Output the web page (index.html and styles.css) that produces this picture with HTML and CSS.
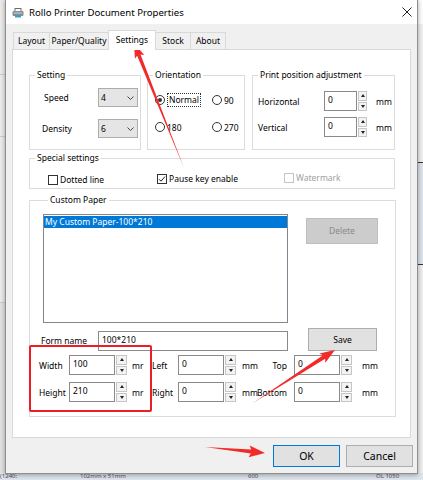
FILE: index.html
```html
<!DOCTYPE html>
<html>
<head>
<meta charset="utf-8">
<link rel="stylesheet" href="styles.css">
</head>
<body>
<div class="desktop">
  <div class="bg-table">
    <span class="c1">(1240:</span><span class="c2">102mm x 51mm</span><span class="c3">600</span><span class="c4">OL 1050</span>
  </div>

  <div class="window">
    <div class="titlebar">
      <svg class="app-icon" width="12" height="10" viewBox="0 0 12 10">
        <rect x="3" y="0.5" width="6" height="3" fill="#fff" stroke="#6d6d6d" stroke-width="1"/>
        <rect x="0.5" y="3" width="11" height="5" rx="1" fill="#8a8f96"/>
        <rect x="2" y="4.5" width="8" height="1" fill="#c9ced4"/>
        <rect x="3" y="7" width="6" height="2.5" fill="#3aa0c8"/>
      </svg>
      <span class="title">Rollo Printer Document Properties</span>
      <svg class="close" width="10" height="10" viewBox="0 0 10 10">
        <path d="M0.5 0.5L9.5 9.5M9.5 0.5L0.5 9.5" stroke="#222" stroke-width="1"/>
      </svg>
    </div>

    <div class="client">
      <div class="tabs">
        <div class="tab t-layout">Layout</div>
        <div class="tab t-paper">Paper/Quality</div>
        <div class="tab t-settings active">Settings</div>
        <div class="tab t-stock">Stock</div>
        <div class="tab t-about">About</div>
      </div>

      <div class="panel">
        <div class="row1">
          <fieldset class="grp g-setting">
            <legend>Setting</legend>
            <div class="setting-grid">
              <span class="lbl speed">Speed</span>
              <div class="combo"><span>4</span><svg class="chev" width="7" height="4" viewBox="0 0 7 4"><path d="M0.5 0.5L3.5 3.5L6.5 0.5" fill="none" stroke="#333" stroke-width="0.9"/></svg></div>
              <span class="lbl">Density</span>
              <div class="combo"><span>6</span><svg class="chev" width="7" height="4" viewBox="0 0 7 4"><path d="M0.5 0.5L3.5 3.5L6.5 0.5" fill="none" stroke="#333" stroke-width="0.9"/></svg></div>
            </div>
          </fieldset>

          <fieldset class="grp g-orient">
            <legend>Orientation</legend>
            <div class="orient-grid">
              <label class="radio"><span class="rdot checked"></span><span class="focus">Normal</span></label>
              <label class="radio"><span class="rdot"></span><span>90</span></label>
              <label class="radio"><span class="rdot"></span><span>180</span></label>
              <label class="radio"><span class="rdot"></span><span>270</span></label>
            </div>
          </fieldset>

          <fieldset class="grp g-print">
            <legend>Print position adjustment</legend>
            <div class="print-grid">
              <span class="lbl">Horizontal</span>
              <div class="spin small"><div class="spin-in">0</div><div class="spin-btns"><span class="up"></span><span class="down"></span></div></div>
              <span class="unit">mm</span>
              <span class="lbl">Vertical</span>
              <div class="spin small"><div class="spin-in">0</div><div class="spin-btns"><span class="up"></span><span class="down"></span></div></div>
              <span class="unit">mm</span>
            </div>
          </fieldset>
        </div>

        <fieldset class="grp g-special">
          <legend>Special settings</legend>
          <div class="special-row">
            <label class="check c-dotted"><span class="cbox"></span><span>Dotted line</span></label>
            <label class="check c-pause"><span class="cbox"><svg width="8" height="8" viewBox="0 0 8 8"><path d="M1 4.2L3 6.2L7 1.5" fill="none" stroke="#222" stroke-width="1"/></svg></span><span>Pause key enable</span></label>
            <label class="check c-water disabled"><span class="cbox"></span><span>Watermark</span></label>
          </div>
        </fieldset>

        <fieldset class="grp g-custom">
          <legend>Custom Paper</legend>
          <div class="list-row">
            <div class="listbox"><div class="item sel">My Custom Paper-100*210</div></div>
            <div class="btn btn-delete">Delete</div>
          </div>
          <div class="form-row">
            <span class="lbl form-lbl">Form name</span>
            <div class="textbox">100*210</div>
            <div class="btn btn-save">Save</div>
          </div>
          <div class="size-grid">
            <span class="lbl">Width</span>
            <div class="spin"><div class="spin-in">100</div><div class="spin-btns"><span class="up"></span><span class="down"></span></div></div>
            <span class="unit u1">mr</span>
            <span class="lbl">Left</span>
            <div class="spin"><div class="spin-in">0</div><div class="spin-btns"><span class="up"></span><span class="down"></span></div></div>
            <span class="unit u2">mm</span>
            <span class="lbl r">Top</span>
            <div class="spin"><div class="spin-in">0</div><div class="spin-btns"><span class="up"></span><span class="down"></span></div></div>
            <span class="unit u3">mm</span>

            <span class="lbl">Height</span>
            <div class="spin"><div class="spin-in">210</div><div class="spin-btns"><span class="up"></span><span class="down"></span></div></div>
            <span class="unit u1">mr</span>
            <span class="lbl">Right</span>
            <div class="spin"><div class="spin-in">0</div><div class="spin-btns"><span class="up"></span><span class="down"></span></div></div>
            <span class="unit u2">mm</span>
            <span class="lbl r">Bottom</span>
            <div class="spin"><div class="spin-in">0</div><div class="spin-btns"><span class="up"></span><span class="down"></span></div></div>
            <span class="unit u3">mm</span>
          </div>
        </fieldset>
      </div>

      <div class="buttons">
        <div class="btn btn-ok">OK</div>
        <div class="btn btn-cancel">Cancel</div>
      </div>
    </div>
  </div>

  <div class="redbox"></div>
  <svg class="arrows" width="423" height="480" viewBox="0 0 423 480">
    <g fill="#f22a2a">
      <g transform="translate(184 168) rotate(-111.8)"><polygon points="0,0 121.6,-1.8 119.6,-5 134.6,0 119.6,5 121.6,1.8"/></g>
      <g transform="translate(253 403) rotate(-32.9)"><polygon points="0,0 84.6,-2 82.6,-5.5 97.6,0 82.6,5.5 84.6,2"/></g>
      <g transform="translate(205 447) rotate(5.7)"><polygon points="0,0 46.3,-2 44.3,-6 60.3,0 44.3,6 46.3,2"/></g>
    </g>
  </svg>
</div>
</body>
</html>
```

FILE: styles.css
```css
* { box-sizing: border-box; }
html, body { margin: 0; padding: 0; }
body {
  font-family: "Noto Sans", "Open Sans", sans-serif;
  font-size: 8.5px;
  color: #000;
}

.desktop {
  position: relative;
  width: 423px;
  height: 480px;
  overflow: hidden;
  display: flex;
  flex-direction: column;
  justify-content: flex-end;
  background:
    linear-gradient(to bottom, #fff 0, #fff 24px, #f0f0f0 24px, #f0f0f0 162px, #333 162px, #333 163px, #dde4ec 163px, #dde4ec 264px, #333 264px, #333 265px, #efefef 265px) right top / 6px 100% no-repeat,
    linear-gradient(to bottom, #ececec 0, #ececec 74px, #cfcfcf 74px, #cfcfcf 75px, #ececec 75px, #ececec 136px, #cfcfcf 136px, #cfcfcf 137px, #ececec 137px, #ececec 302px, #cfcfcf 302px, #cfcfcf 303px, #e2e2e2 303px) left top / 6px 100% no-repeat,
    #e9e9e9;
}

.bg-table {
  height: 7px;
  background: #dfe5ec;
  color: #555;
  font-size: 6px;
  line-height: 7px;
  overflow: hidden;
  display: flex;
}
.bg-table .c1 { width: 80px; }
.bg-table .c2 { width: 168px; }
.bg-table .c3 { width: 128px; }

/* window */
.window {
  position: absolute;
  left: 5px;
  top: -1px;
  width: 413px;
  height: 475px;
  background: #f0f0f0;
  border: 1px solid #8f8f8f;
  box-shadow: 0 1px 5px rgba(0,0,0,0.35);
  display: flex;
  flex-direction: column;
}
.titlebar {
  height: 24px;
  background: #fff;
  display: flex;
  align-items: center;
  padding: 0 5px 0 6px;
}
.app-icon { margin-top: 1px; }
.title {
  margin-left: 5px;
  font-size: 9.6px;
  color: #000;
}
.close { margin-left: auto; }

.client {
  flex: 1;
  padding: 6px 4px 0 6px;
  display: flex;
  flex-direction: column;
}

/* tabs */
.tabs {
  height: 19px;
  display: flex;
  align-items: flex-end;
  padding-left: 1px;
  position: relative;
  z-index: 2;
}
.tab {
  height: 17px;
  margin-right: -1px;
  border: 1px solid #d9d9d9;
  border-bottom: none;
  background: #f0f0f0;
  display: flex;
  align-items: center;
  justify-content: center;
  line-height: 12px;
}
.tab.active {
  height: 20px;
  margin-bottom: -1px;
  background: #fff;
  position: relative;
  z-index: 3;
  padding-bottom: 2px;
}
.t-layout { width: 37px; }
.t-paper { width: 60px; }
.t-settings { width: 48px; }
.t-stock { width: 36px; }
.t-about { width: 36px; }

.panel {
  width: 399px;
  height: 389px;
  border: 1px solid #d9d9d9;
  background: #fff;
  padding: 19px 0 0 16px;
}

/* group boxes */
fieldset.grp {
  margin: 0;
  padding: 0;
  min-width: 0;
  border: 1px solid #dcdcdc;
}
fieldset.grp legend {
  margin-left: 5px;
  padding: 0 2px;
  line-height: 12px;
  font-size: 8.5px;
}

.row1 { display: flex; }
.g-setting { width: 112px; height: 81px; }
.g-orient { width: 98px; height: 81px; margin-left: 6px !important; }
.g-print { width: 143px; height: 81px; margin-left: 7px !important; }

.setting-grid {
  display: grid;
  grid-template-columns: 56px 40px;
  grid-auto-rows: 19px;
  row-gap: 12px;
  align-items: center;
  padding: 7px 0 0 12px;
}
.lbl { white-space: nowrap; }
.speed { margin-left: 2px; }
.combo {
  height: 19px;
  background: #e5e5e5;
  border: 1px solid #adadad;
  display: flex;
  align-items: center;
  padding-left: 2px;
  line-height: 12px;
}
.chev { margin-left: auto; margin-right: 3px; }

.orient-grid {
  display: grid;
  grid-template-columns: 57px auto;
  grid-auto-rows: 14px;
  row-gap: 13px;
  align-items: center;
  padding: 12px 0 0 7px;
}
.radio { display: flex; align-items: center; gap: 2px; white-space: nowrap; }
.rdot {
  width: 10px;
  height: 10px;
  border: 1px solid #333;
  border-radius: 50%;
  background: #fff;
  display: flex;
  align-items: center;
  justify-content: center;
}
.rdot.checked::after {
  content: "";
  width: 4px;
  height: 4px;
  border-radius: 50%;
  background: #333;
}
.focus { border: 1px dotted #333; padding: 0 1px; line-height: 12px; }

.print-grid {
  display: grid;
  grid-template-columns: 66px 52px auto;
  grid-auto-rows: 20px;
  row-gap: 6px;
  align-items: center;
  padding: 10px 0 0 5px;
}

/* spinner */
.spin { display: flex; gap: 1px; height: 20px; width: 58px; }
.spin-in {
  flex: 1;
  background: #fff;
  border: 1px solid #8a8a8a;
  padding: 1px 0 0 3px;
  line-height: 13px;
}
.spin-btns { width: 11px; display: flex; flex-direction: column; gap: 1px; }
.spin.small { width: 43px; }
.spin.small .spin-btns { width: 9px; }
.spin-btns span {
  flex: 1;
  border: 1px solid #c6c6c6;
  background: #f3f3f3;
  display: flex;
  align-items: center;
  justify-content: center;
}
.spin-btns .up::after {
  content: "";
  border-left: 2.5px solid transparent;
  border-right: 2.5px solid transparent;
  border-bottom: 3px solid #222;
}
.spin-btns .down::after {
  content: "";
  border-left: 2.5px solid transparent;
  border-right: 2.5px solid transparent;
  border-top: 3px solid #222;
}

/* special */
.g-special { height: 37px; margin-top: 2px !important; width: 366px; }
.special-row {
  display: flex;
  align-items: center;
  padding: 6px 0 0 18px;
  height: 24px;
}
.check { display: flex; align-items: center; gap: 2px; white-space: nowrap; line-height: 12px; }
.c-dotted { width: 109px; margin-top: 2px; }
.c-pause { width: 127px; }
.c-water { margin-top: -2px; }
.cbox {
  width: 10px;
  height: 10px;
  border: 1px solid #333;
  background: #fff;
  display: flex;
  align-items: center;
  justify-content: center;
}
.check.disabled { color: #a0a0a0; }
.check.disabled .cbox { border-color: #c4c4c4; }

/* custom paper */
.g-custom { height: 223px; margin-top: 5px !important; width: 367px; padding: 8px 0 0 13px !important; }
.list-row { display: flex; align-items: flex-start; }
.listbox {
  width: 245px;
  height: 109px;
  border: 1px solid #82878f;
  padding: 1px 0 0 0;
}
.item { height: 12px; line-height: 12px; padding-left: 1px; }
.item.sel { background: #0078d7; color: #fff; }

.btn {
  display: flex;
  align-items: center;
  justify-content: center;
  border: 1px solid #adadad;
  background: #e1e1e1;
  line-height: 12px;
}
.btn-delete {
  width: 72px;
  height: 26px;
  margin: 4px 0 0 18px;
  background: #cccccc;
  border-color: #bfbfbf;
  color: #8a8a8a;
}

.form-row {
  display: flex;
  align-items: flex-end;
  margin-top: 5px;
  height: 23px;
}
.form-lbl { width: 57px; margin-left: -2px; align-self: center; padding-top: 2px; }
.textbox {
  width: 190px;
  height: 20px;
  border: 1px solid #8a8a8a;
  background: #fff;
  padding: 1px 0 0 3px;
  line-height: 13px;
}
.btn-save { width: 69px; height: 23px; margin-left: 20px; }

.size-grid {
  display: grid;
  grid-template-columns: 30px 58px 25px 26px 58px 22px 36px 58px auto;
  grid-auto-rows: 20px;
  row-gap: 7px;
  align-items: center;
  margin: 4px 0 0 -4px;
}
.unit { white-space: nowrap; }
.u1 { padding-left: 5px; }
.u2 { padding-left: 6px; }
.u3 { padding-left: 10px; }
.lbl.r { justify-self: end; padding-right: 7px; }

/* dialog buttons */
.buttons {
  display: flex;
  justify-content: flex-end;
  gap: 6px;
  margin-top: 7px;
}
.btn-ok, .btn-cancel { width: 67px; height: 22px; font-size: 10.5px; }
.btn-ok { border-color: #0078d7; }

/* overlays */
.redbox {
  position: absolute;
  left: 29px;
  top: 345px;
  width: 123px;
  height: 67px;
  border: 2px solid #ee1c25;
  border-radius: 2px;
}
.arrows {
  position: absolute;
  left: 0;
  top: 0;
  pointer-events: none;
}
```
